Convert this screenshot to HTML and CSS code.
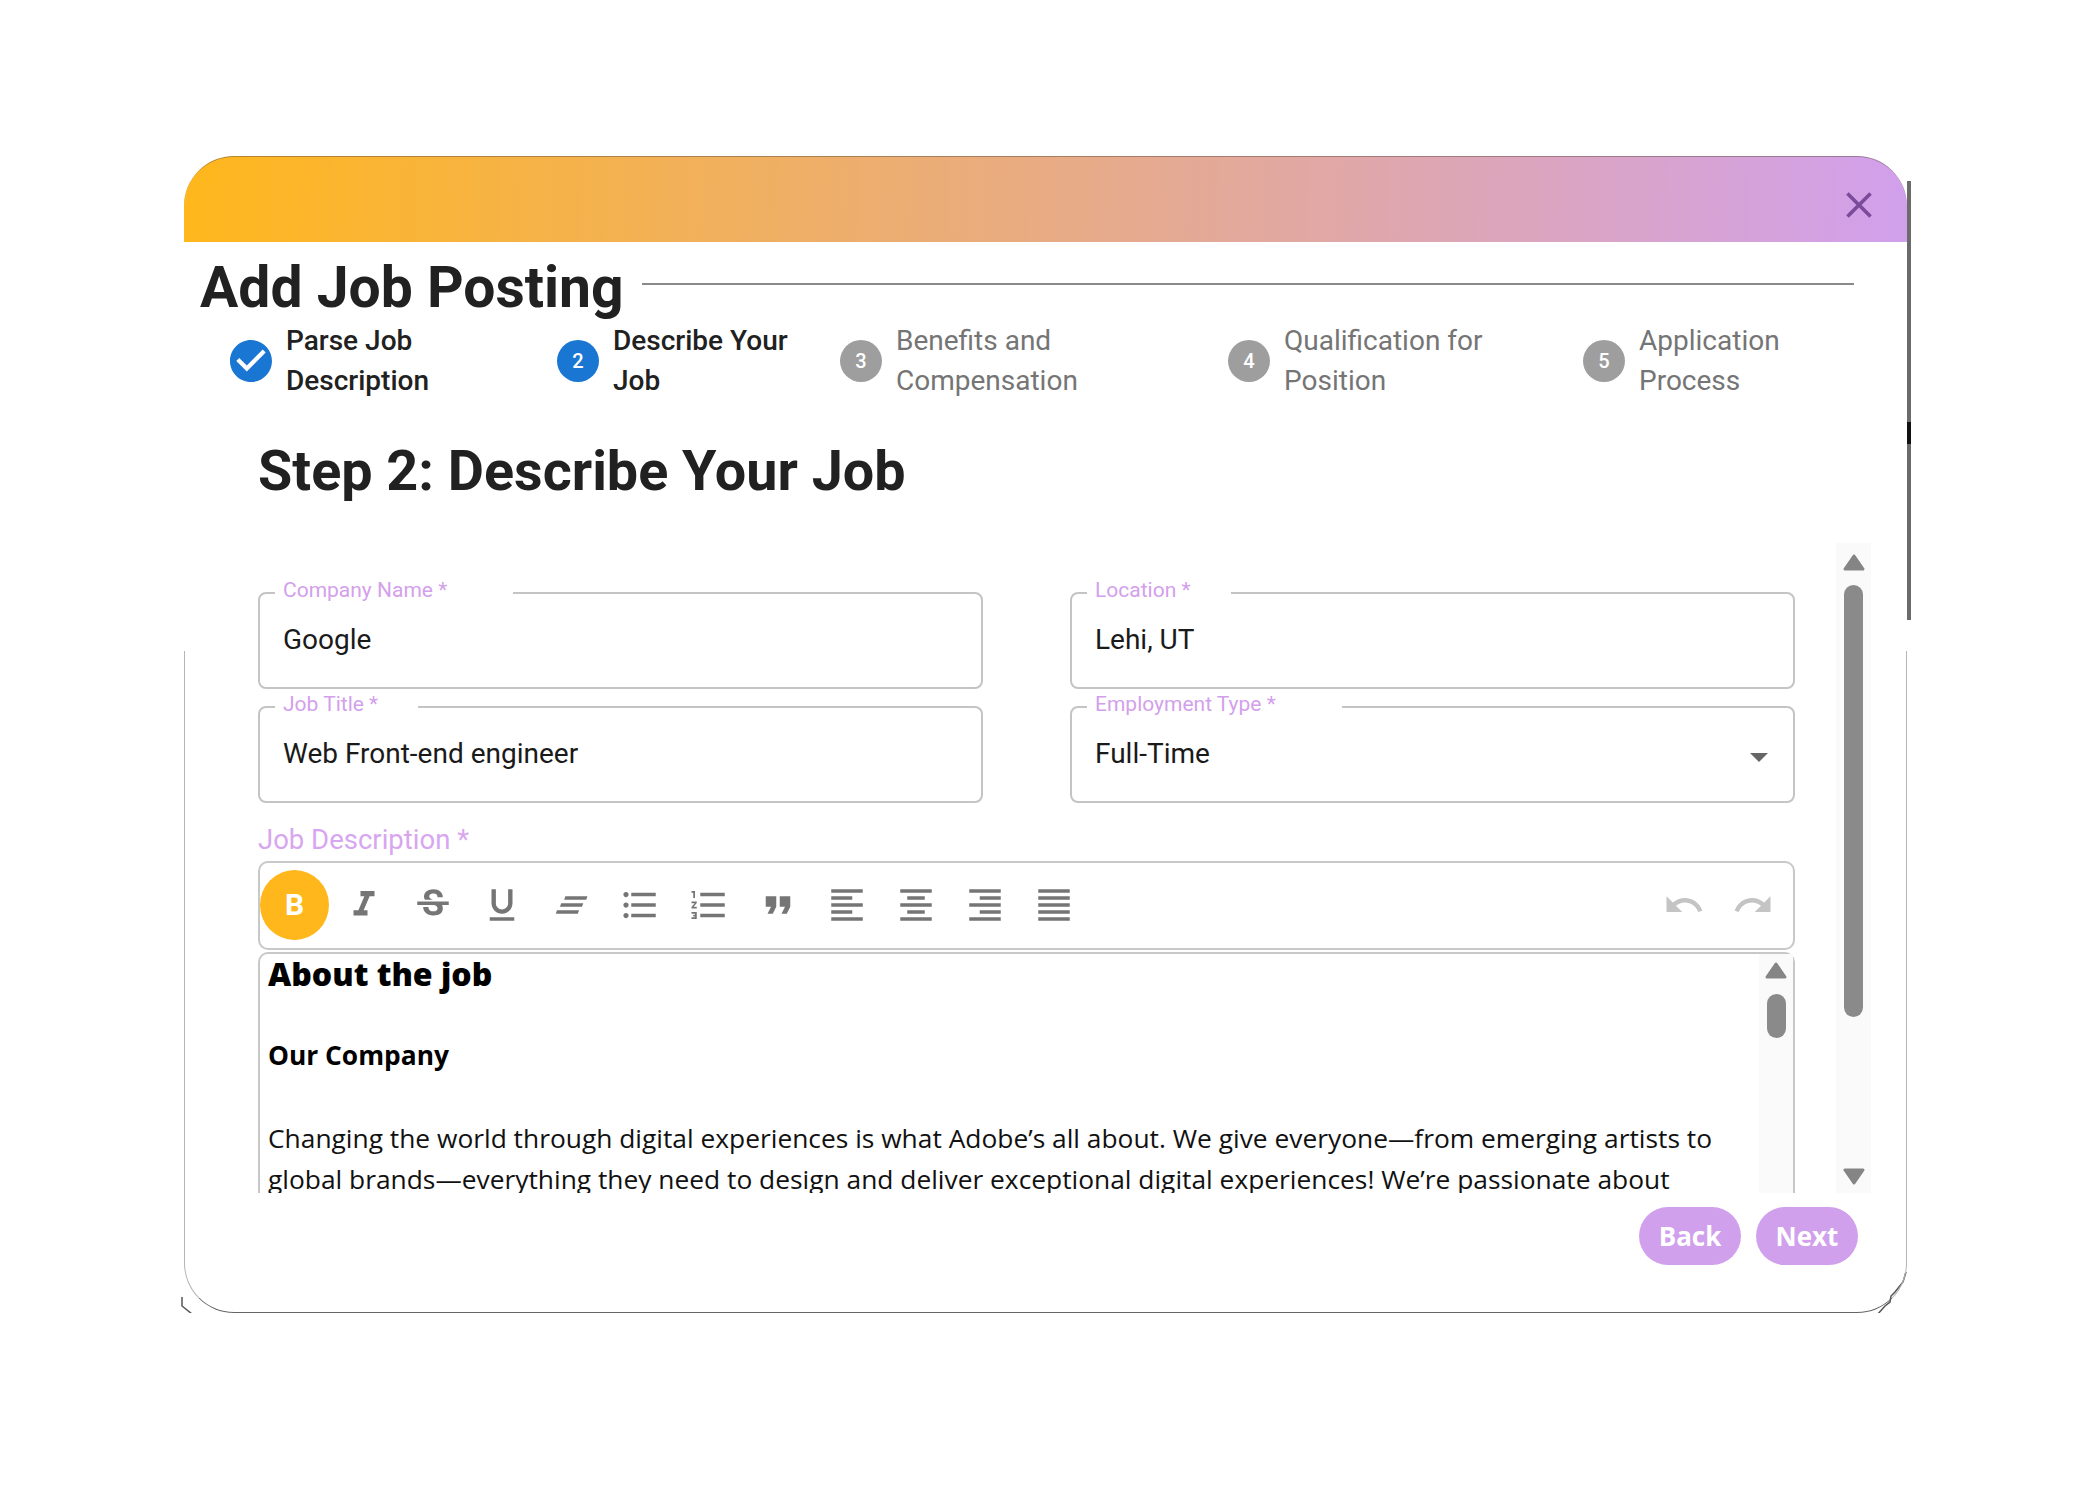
FILE: index.html
```html
<!DOCTYPE html>
<html>

<head>
    <meta charset="UTF-8">
    <title>Add Job Posting</title>
    <link rel="stylesheet" href="styles.css">
</head>

<body>
    <div class="modal">
        <div class="banner">
            <svg class="close" viewBox="0 0 24 24"><path d="M19 6.41L17.59 5 12 10.59 6.41 5 5 6.41 10.59 12 5 17.59 6.41 19 12 13.41 17.59 19 19 17.59 13.41 12z"/></svg>
        </div>

        <div class="title-row">
            <h1>Add Job Posting</h1>
            <div class="title-rule"></div>
        </div>

        <div class="stepper">
            <div class="step active">
                <svg class="step-check" viewBox="2 2 20 20"><path d="M12 2C6.48 2 2 6.48 2 12s4.48 10 10 10 10-4.48 10-10S17.52 2 12 2zm-2 15l-5-5 1.41-1.41L10 14.17l7.59-7.59L19 8l-9 9z"/></svg>
                <span>Parse Job<br>Description</span>
            </div>
            <div class="step active">
                <div class="step-num">2</div>
                <span>Describe Your<br>Job</span>
            </div>
            <div class="step">
                <div class="step-num">3</div>
                <span>Benefits and<br>Compensation</span>
            </div>
            <div class="step">
                <div class="step-num">4</div>
                <span>Qualification for<br>Position</span>
            </div>
            <div class="step">
                <div class="step-num">5</div>
                <span>Application<br>Process</span>
            </div>
        </div>

        <h2>Step 2: Describe Your Job</h2>

        <div class="pane">
            <div class="form">
                <div class="fields">
                    <fieldset class="field">
                        <legend class="legend-long">Company Name *</legend>
                        <div class="field-value">Google</div>
                    </fieldset>
                    <fieldset class="field">
                        <legend>Location *</legend>
                        <div class="field-value">Lehi, UT</div>
                    </fieldset>
                    <fieldset class="field">
                        <legend>Job Title *</legend>
                        <div class="field-value">Web Front-end engineer</div>
                    </fieldset>
                    <fieldset class="field">
                        <legend class="legend-long">Employment Type *</legend>
                        <div class="field-value">Full-Time</div>
                        <div class="caret"></div>
                    </fieldset>
                </div>

                <div class="desc-label">Job Description *</div>

                <div class="toolbar">
                    <button class="tool tool-bold">B</button>
                    <div class="tool"><svg viewBox="0 0 24 24"><path d="M10 4v3h2.21l-3.42 8H6v3h8v-3h-2.21l3.42-8H18V4z"/></svg></div>
                    <div class="tool"><svg viewBox="0 0 24 24"><path d="M7.24 8.75c-.26-.48-.39-1.03-.39-1.67 0-.61.13-1.16.4-1.67.26-.5.63-.93 1.11-1.29.48-.35 1.05-.63 1.7-.83.66-.19 1.39-.29 2.18-.29.81 0 1.54.11 2.21.34.66.22 1.23.54 1.69.94.47.4.83.88 1.08 1.43.25.55.38 1.15.38 1.81h-3.01c0-.31-.05-.59-.15-.85-.09-.27-.24-.49-.44-.68-.2-.19-.45-.33-.75-.44-.3-.1-.66-.16-1.06-.16-.39 0-.74.04-1.03.13-.29.09-.53.21-.72.36-.19.16-.34.34-.44.55-.1.21-.15.43-.15.66 0 .48.25.88.74 1.21.38.25.77.48 1.41.7H7.39c-.05-.08-.11-.17-.15-.25zM21 12v-2H3v2h9.62c.18.07.4.14.55.2.37.17.66.34.87.51.21.17.35.36.43.57.07.2.11.43.11.69 0 .23-.05.45-.14.66-.09.2-.23.38-.42.53-.19.15-.42.26-.71.35-.29.08-.63.13-1.01.13-.43 0-.83-.04-1.18-.13s-.66-.23-.91-.42c-.25-.19-.45-.44-.59-.75-.14-.31-.25-.76-.25-1.21H6.4c0 .55.08 1.13.24 1.58.16.45.37.85.65 1.21.28.35.6.66.98.92.37.26.78.48 1.22.65.44.17.9.3 1.38.39.48.08.96.13 1.44.13.8 0 1.53-.09 2.18-.28s1.21-.45 1.67-.79c.46-.34.82-.77 1.07-1.27s.38-1.07.38-1.71c0-.6-.1-1.14-.31-1.61-.05-.11-.11-.23-.17-.33H21z"/></svg></div>
                    <div class="tool"><svg viewBox="0 0 24 24"><path d="M12 17c3.31 0 6-2.69 6-6V3h-2.5v8c0 1.93-1.57 3.5-3.5 3.5S8.5 12.93 8.5 11V3H6v8c0 3.31 2.69 6 6 6zm-7 2v2h14v-2H5z"/></svg></div>
                    <div class="tool"><svg viewBox="0 0 24 24"><path d="M8.800 7h12.600l-.7 2H8.100zM6.400 11H19l-.7 2H5.700zM4 15h12.600l-.7 2H3.300z"/></svg></div>
                    <div class="tool"><svg viewBox="0 0 24 24"><path d="M4 10.500c-.83 0-1.500.67-1.500 1.500s.67 1.500 1.500 1.500 1.500-.67 1.500-1.500-.67-1.500-1.500-1.500zm0-6c-.83 0-1.500.67-1.500 1.500S3.170 7.500 4 7.500 5.500 6.830 5.500 6 4.830 4.500 4 4.500zm0 12c-.83 0-1.500.68-1.500 1.500s.68 1.500 1.500 1.500 1.500-.68 1.500-1.500-.67-1.500-1.500-1.500zM7 19h14v-2H7v2zm0-6h14v-2H7v2zm0-8v2h14V5H7z"/></svg></div>
                    <div class="tool"><svg viewBox="0 0 24 24"><path d="M2 17h2v.5H3v1h1v.5H2v1h3v-4H2v1zm1-9h1V4H2v1h1v3zm-1 3h1.800L2 13.100v.9h3v-1H3.200L5 10.900V10H2v1zm5-6v2h14V5H7zm0 14h14v-2H7v2zm0-6h14v-2H7v2z"/></svg></div>
                    <div class="tool"><svg viewBox="0 0 24 24"><path d="M6 17h3l2-4V7H5v6h3zm8 0h3l2-4V7h-6v6h3z"/></svg></div>
                    <div class="tool"><svg viewBox="0 0 24 24"><path d="M15 15H3v2h12v-2zm0-8H3v2h12V7zM3 13h18v-2H3v2zm0 8h18v-2H3v2zM3 3v2h18V3H3z"/></svg></div>
                    <div class="tool"><svg viewBox="0 0 24 24"><path d="M7 15v2h10v-2H7zm-4 6h18v-2H3v2zm0-8h18v-2H3v2zm4-6v2h10V7H7zM3 3v2h18V3H3z"/></svg></div>
                    <div class="tool"><svg viewBox="0 0 24 24"><path d="M3 21h18v-2H3v2zm6-4h12v-2H9v2zm-6-4h18v-2H3v2zm6-4h12V7H9v2zM3 3v2h18V3H3z"/></svg></div>
                    <div class="tool"><svg viewBox="0 0 24 24"><path d="M3 21h18v-2H3v2zm0-4h18v-2H3v2zm0-4h18v-2H3v2zm0-4h18V7H3v2zm0-6v2h18V3H3z"/></svg></div>
                    <div class="tool tool-off history-start"><svg viewBox="0 0 24 24"><path d="M12.500 8c-2.650 0-5.050.99-6.900 2.600L2 7v9h9l-3.620-3.620c1.390-1.160 3.160-1.880 5.120-1.880 3.540 0 6.550 2.310 7.600 5.500l2.370-.78C21.080 11.030 17.150 8 12.500 8z"/></svg></div>
                    <div class="tool tool-off"><svg viewBox="0 0 24 24"><path d="M18.400 10.600C16.550 8.990 14.150 8 11.500 8c-4.650 0-8.580 3.030-9.960 7.220L3.900 16c1.050-3.190 4.050-5.500 7.600-5.500 1.950 0 3.730.72 5.120 1.880L13 16h9V7l-3.600 3.600z"/></svg></div>
                </div>

                <div class="editor">
                    <div class="editor-text">
                        <div class="about">About the job</div>
                        <div class="company">Our Company</div>
                        <p>Changing the world through digital experiences is what Adobe’s all about. We give everyone—from emerging artists to global brands—everything they need to design and deliver exceptional digital experiences! We’re passionate about</p>
                    </div>
                    <div class="bar bar-small">
                        <svg class="arrow" viewBox="0 0 22 17"><path d="M11 2L20 15H2z"/></svg>
                        <div class="thumb"></div>
                    </div>
                </div>
            </div>

            <div class="bar bar-main">
                <svg class="arrow" viewBox="0 0 22 17"><path d="M11 2L20 15H2z"/></svg>
                <div class="thumb"></div>
                <svg class="arrow arrow-down" viewBox="0 0 22 17"><path d="M2 2H20L11 15z"/></svg>
            </div>
        </div>

        <div class="actions">
            <button class="pill">Back</button>
            <button class="pill">Next</button>
        </div>

        <!-- rough leftovers at the bottom corners -->
        <svg class="nick nick-left" viewBox="0 0 12 18"><path d="M1 0v9l10 8"/></svg>
        <svg class="nick nick-right" viewBox="0 0 31 44"><path d="M30 0l-3 10-8 10-4 4-1 6-5 4-8 9"/></svg>
    </div>
</body>

</html>
```

FILE: styles.css
```css
* {
    margin: 0;
    padding: 0;
    box-sizing: border-box;
}

body {
    background: #fff;
    padding: 156px 0 0 184px;
    font-family: Roboto, "Liberation Sans", sans-serif;
    color: #212121;
}

.modal {
    position: relative;
    width: 1723px;
    height: 1157px;
    background: #fff;
    border-radius: 50px;
}

/* thin outline, only the lower part of the dialog has it */
.modal::after {
    content: "";
    position: absolute;
    left: 0;
    right: 0;
    bottom: 0;
    height: 661px;
    border: 1px solid #b5b5b5;
    border-top: 0;
    border-bottom-color: #666;
    border-radius: 0 0 50px 50px;
    pointer-events: none;
}

/* dark strip peeking out behind the right edge */
.modal::before {
    content: "";
    position: absolute;
    right: -4px;
    top: 25px;
    width: 4px;
    height: 439px;
    background: linear-gradient(#6b6b6b 0 241px, #111 241px 263px, #6b6b6b 263px);
}

.nick {
    position: absolute;
    fill: none;
    stroke: #555;
    stroke-width: 1.5;
}

.nick-left {
    left: -3px;
    bottom: -2px;
    width: 12px;
    height: 18px;
}

.nick-right {
    right: 0;
    bottom: -3px;
    width: 31px;
    height: 44px;
}

.banner {
    height: 86px;
    background: linear-gradient(92deg, #ffb71c 0%, #d1a0ec 100%);
    border-top: 1px solid rgba(90, 70, 60, 0.45);
    border-radius: 50px 50px 0 0;
    display: flex;
    justify-content: flex-end;
    padding: 26px 26px 0 0;
}

.close {
    width: 44px;
    height: 44px;
    fill: #7b4b9b;
}

.title-row {
    height: 79px;
    display: flex;
    align-items: flex-start;
    padding: 0 53px 0 16px;
    gap: 18px;
}

h1 {
    font-size: 57px;
    font-weight: 700;
    line-height: 66px;
    margin-top: 13px;
    white-space: nowrap;
}

.title-rule {
    flex: 1;
    height: 2px;
    background: #8a8a8a;
    margin-top: 41px;
}

.stepper {
    height: 80px;
    padding-left: 46px;
    display: grid;
    grid-template-columns: 327px 283px 388px 355px 1fr;
}

.step {
    display: flex;
    align-items: center;
    gap: 14px;
    font-size: 28px;
    line-height: 40px;
    color: #757575;
}

.step.active {
    color: #212121;
    font-weight: 500;
}

.step-check {
    width: 42px;
    height: 42px;
    fill: #1976d2;
}

.step-num {
    width: 42px;
    height: 42px;
    border-radius: 50%;
    background: #9e9e9e;
    color: #fff;
    font-size: 20px;
    font-weight: 500;
    line-height: 42px;
    text-align: center;
}

.step.active .step-num {
    background: #1976d2;
}

h2 {
    font-size: 55.7px;
    font-weight: 700;
    line-height: 70px;
    margin: 35px 0 37px 74px;
}

.pane {
    height: 650px;
    margin-left: 74px;
    display: flex;
    gap: 41px;
    overflow: hidden;
}

.form {
    width: 1537px;
    padding-top: 35px;
}

.fields {
    display: grid;
    grid-template-columns: 725px 725px;
    column-gap: 87px;
    row-gap: 3px;
}

.field {
    position: relative;
    height: 111px;
    border: 2px solid #c4c4c4;
    border-radius: 8px;
    padding: 0 23px;
}

/* the notch is wider than the label, extra room on the right */
.field legend {
    font-size: 21px;
    line-height: 24px;
    color: #d3a0ec;
    margin-left: -8px;
    padding: 0 40px 6px 8px;
}

.field legend.legend-long {
    padding-right: 66px;
}

.field-value {
    font-size: 28px;
    line-height: 36px;
    padding-top: 14px;
    color: #1a1a1a;
}

.caret {
    position: absolute;
    right: 25px;
    top: 31px;
    border-left: 9px solid transparent;
    border-right: 9px solid transparent;
    border-top: 9px solid #666;
}

.desc-label {
    font-size: 27.5px;
    line-height: 40px;
    color: #d8a6f0;
    margin-top: 17px;
    margin-bottom: 1px;
}

.toolbar {
    height: 89px;
    border: 2px solid #c8c8c8;
    border-radius: 10px;
    display: flex;
    align-items: center;
    padding: 0 6px 2px 0;
}

.tool {
    width: 69px;
    height: 69px;
    display: flex;
    align-items: center;
    justify-content: center;
    border: 0;
    background: none;
}

.tool svg {
    width: 42px;
    height: 42px;
    fill: #757575;
}

.tool-bold {
    height: 70px;
    border-radius: 50%;
    background: #ffb71c;
    color: #fff;
    font-family: Roboto, sans-serif;
    font-size: 30px;
    font-weight: 700;
}

.tool-off svg {
    fill: #c4c4c4;
}

.history-start {
    margin-left: auto;
}

.editor {
    height: 300px;
    margin-top: 2px;
    border: 2px solid #c8c8c8;
    border-radius: 10px 10px 0 0;
    display: flex;
    justify-content: space-between;
}

.editor-text {
    width: 1470px;
    padding-left: 8px;
    font-family: "Open Sans", "Noto Sans", sans-serif;
    font-size: 26.35px;
    line-height: 41px;
    color: #111;
}

.about {
    font-size: 32px;
    font-weight: 800;
    line-height: 40px;
    color: #000;
}

.company {
    font-weight: 700;
    margin-top: 41px;
    color: #000;
}

.editor-text p {
    margin-top: 42px;
}

.bar {
    display: flex;
    flex-direction: column;
    align-items: center;
    background: #fafafa;
}

.bar-small {
    width: 34px;
    padding-top: 8px;
}

.bar-main {
    width: 35px;
    height: 650px;
    padding: 11px 0 8px;
}

.arrow {
    width: 22px;
    height: 17px;
    fill: #858585;
    stroke: #858585;
    stroke-width: 3;
    stroke-linejoin: round;
}

.arrow-down {
    margin-top: auto;
}

.thumb {
    border-radius: 10px;
    background: #8a8a8a;
}

.bar-main .thumb {
    width: 19px;
    height: 432px;
    margin-top: 14px;
}

.bar-small .thumb {
    width: 19px;
    height: 44px;
    margin-top: 15px;
}

.actions {
    margin-top: 14px;
    padding-right: 49px;
    display: flex;
    justify-content: flex-end;
    gap: 15px;
}

.pill {
    width: 102px;
    height: 58px;
    border: 0;
    border-radius: 29px;
    background: #d1a0ec;
    color: #fff;
    font-family: "Open Sans", sans-serif;
    font-size: 26px;
    font-weight: 700;
}
```
